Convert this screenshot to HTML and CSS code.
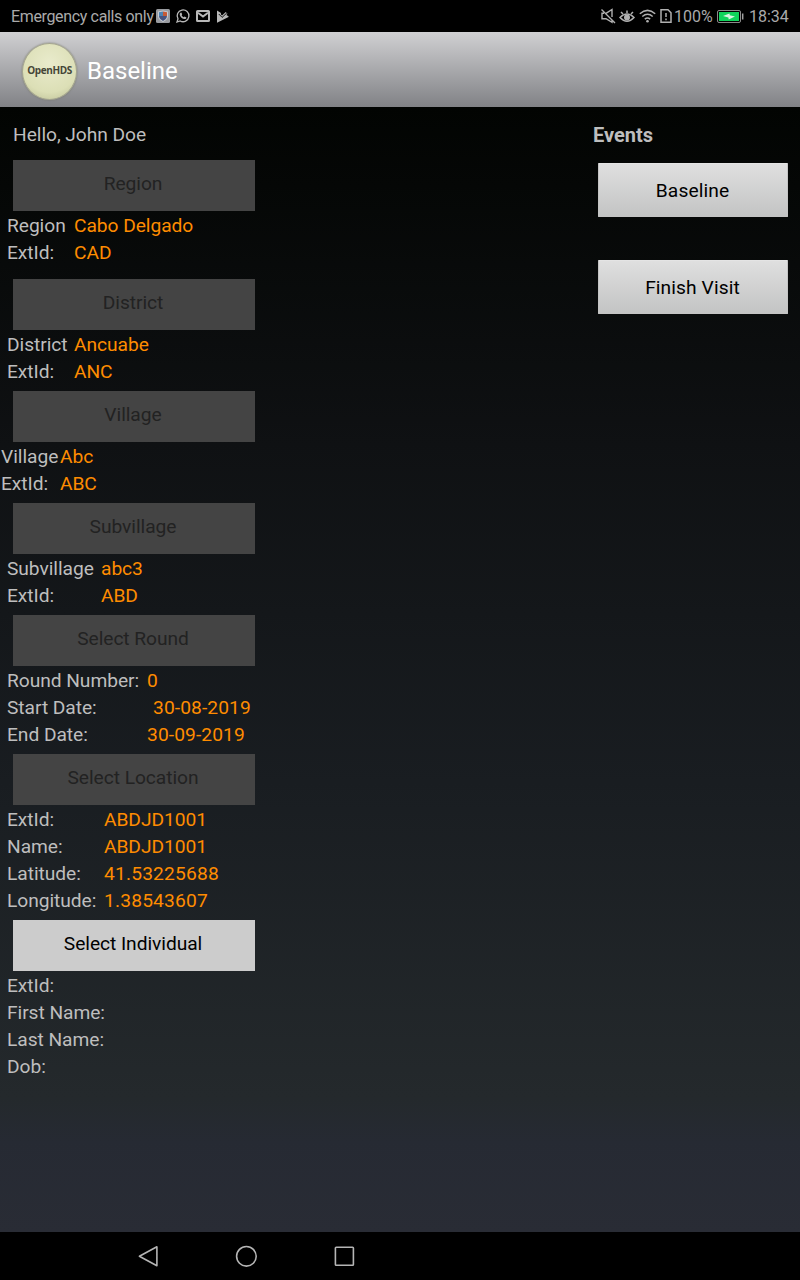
FILE: index.html
```
<!DOCTYPE html>
<html lang="en">
<head>
<meta charset="utf-8">
<title>Baseline</title>
<link rel="stylesheet" href="styles.css">
</head>
<body>
<div class="screen">
  <header class="status">
    <span class="carrier">Emergency calls only</span>
    <div class="notices">
      <svg width="14" height="14" viewBox="0 0 14 14"><rect width="14" height="14" rx="1.5" fill="#999ba0"/><path d="M2 2.5 7 1.5 12 2.5V7c0 3-3 5-5 6-2-1-5-3-5-6z" fill="#c5cad2"/><path d="M3 3.3 7 2.5V7H3z" fill="#4b82b2"/><path d="M7 2.5 11 3.3V7H7z" fill="#c65a36"/><path d="M3 7h8c0 2.300-2 4-4 5-2-1-4-2.700-4-5z" fill="#46547f"/></svg>
      <svg width="14" height="14" viewBox="0 0 14 14"><path d="M1 13 2 9.900A5.900 5.900 0 1 1 4.200 12z" fill="none" stroke="#b8b8b8" stroke-width="1.300"/><path d="M4.500 3.700 5.400 3.600 6.200 5.400 5.600 6.200Q6.300 7.600 7.800 8.300L8.500 7.500 10.400 8.400C10.300 9.800 9.200 10.300 8 10 5.800 9.500 4.200 7.700 3.800 6 3.600 5 3.900 4.100 4.500 3.700z" fill="#b8b8b8"/></svg>
      <svg width="14" height="12" viewBox="0 0 14 12" fill="none" stroke="#b8b8b8"><rect x="1" y=".9" width="12" height="10.200" rx=".6" stroke-width="2"/><path d="M2 2.700 7 6.500 12 2.700" stroke-width="2"/></svg>
      <svg width="13" height="13" viewBox="0 0 13 13"><path d="M1 .5 5 3 4.800 4.200 6 5.500 9.700 1.900 11.500 3.700 10.300 5 12.500 6.300V7L1 12.800z" fill="#b8b8b8"/><path d="M2.800 4 6.100 7.400 10.800 3" fill="none" stroke="#000" stroke-width=".9"/></svg>
    </div>
    <div class="system">
      <svg width="16" height="16" viewBox="0 0 16 16" fill="none" stroke="#b0b0b0" stroke-width="1.400"><path d="M6 5.300 12 1.500V9M12 12v2.300L6 10.700H2V5.300h2M1.500 1.500 15 15"/></svg>
      <svg class="eye" width="16" height="16" viewBox="0 0 16 16" fill="none" stroke="#b0b0b0" stroke-width="1.500"><path d="M1 9.500Q8 2.500 15 9.500 8 17 1 9.500zM8 5V2.500M4 6 2 4M12 6l2-2"/><circle cx="8" cy="9.500" r="3" fill="#b0b0b0" stroke="none"/></svg>
      <svg class="wifi" width="17" height="14" viewBox="0 0 17 14" fill="none" stroke="#b0b0b0" stroke-width="1.500"><path d="M.8 4.700Q8.500-2 16.200 4.700M3.300 7.500Q8.500 3 13.700 7.500M5.800 10.200Q8.500 8 11.200 10.200"/><circle cx="8.500" cy="12.300" r="1.300" fill="#b0b0b0" stroke="none"/></svg>
      <svg class="sim" width="12" height="14" viewBox="0 0 12 14"><path d="M1 .800H8L11 3.800V13.200H1zM6 4v4M6 9.500v1.700" fill="none" stroke="#b0b0b0" stroke-width="1.500"/></svg>
      <span class="percent">100%</span>
      <svg class="battery" width="27" height="13" viewBox="0 0 27 13"><rect x=".5" y=".5" width="23" height="12" rx="1.500" fill="none" stroke="#8b8b8b"/><rect x="2" y="2" width="20" height="9" fill="#10d45b"/><path d="M6 6 12.500 3.500 12.800 5.300 18 6.500 11.700 9.500 11.400 7.500z" fill="#d8f5e2"/><path d="M25.700 3.500v6" stroke="#a0a0a0" stroke-width="1.500"/></svg>
      <span class="clock">18:34</span>
    </div>
  </header>
  <div class="appbar">
    <div class="logo">OpenHDS</div>
    <h1 class="title">Baseline</h1>
  </div>
  <main class="content">
    <section class="filters">
      <p class="hello">Hello, John Doe</p>
      <div class="group region">
        <button class="pick" disabled>Region</button>
        <dl class="facts"><dt>Region</dt><dd>Cabo Delgado</dd><dt>ExtId:</dt><dd>CAD</dd></dl>
      </div>
      <div class="group district">
        <button class="pick" disabled>District</button>
        <dl class="facts"><dt>District</dt><dd>Ancuabe</dd><dt>ExtId:</dt><dd>ANC</dd></dl>
      </div>
      <div class="group village">
        <button class="pick" disabled>Village</button>
        <dl class="facts"><dt>Village</dt><dd>Abc</dd><dt>ExtId:</dt><dd>ABC</dd></dl>
      </div>
      <div class="group subvillage">
        <button class="pick" disabled>Subvillage</button>
        <dl class="facts"><dt>Subvillage</dt><dd>abc3</dd><dt>ExtId:</dt><dd>ABD</dd></dl>
      </div>
      <div class="group round">
        <button class="pick" disabled>Select Round</button>
        <dl class="facts"><dt>Round Number:</dt><dd>0</dd><dt>Start Date:</dt><dd class="indented">30-08-2019</dd><dt>End Date:</dt><dd>30-09-2019</dd></dl>
      </div>
      <div class="group location">
        <button class="pick" disabled>Select Location</button>
        <dl class="facts"><dt>ExtId:</dt><dd>ABDJD1001</dd><dt>Name:</dt><dd>ABDJD1001</dd><dt>Latitude:</dt><dd class="coord">41.53225688</dd><dt>Longitude:</dt><dd class="coord">1.38543607</dd></dl>
      </div>
      <div class="group individual">
        <button class="pick">Select Individual</button>
        <dl class="facts"><dt>ExtId:</dt><dd></dd><dt>First Name:</dt><dd></dd><dt>Last Name:</dt><dd></dd><dt>Dob:</dt><dd></dd></dl>
      </div>
    </section>
    <aside class="events">
      <h2 class="heading">Events</h2>
      <button class="event">Baseline</button>
      <button class="event">Finish Visit</button>
    </aside>
  </main>
  <nav class="navbar">
    <svg width="22" height="22" viewBox="-.4 -.3 22 22"><path d="M19.500 1.500V20.500L2 11z"/></svg>
    <svg width="22" height="22" viewBox="-.4 -.3 22 22"><circle cx="11" cy="11" r="9.800"/></svg>
    <svg width="22" height="22" viewBox="-.4 -.3 22 22"><rect x="2" y="2" width="18" height="18" rx=".8"/></svg>
  </nav>
</div>
</body>
</html>
```
FILE: styles.css
```
* { box-sizing: border-box; }
body { margin: 0; background: #000; font-family: Roboto, sans-serif; }
h1, h2, p, dl, dd { margin: 0; }
button { border: 0; font-family: inherit; }
svg { display: block; flex: none; overflow: visible; }

.screen {
  display: flex;
  flex-direction: column;
  width: 800px;
  height: 1280px;
  overflow: hidden;
  font-size: 19.2px;
  letter-spacing: -0.05px;
  color: #bebebe;
}

.status {
  display: flex;
  align-items: center;
  flex: none;
  height: 32px;
  padding: 0 11px;
  background: #000;
  color: #aaa;
  font-size: 16px;
  letter-spacing: 0;
  white-space: nowrap;
}
.carrier { width: 145px; padding-top: 1px; letter-spacing: -0.35px; }
.notices { display: flex; align-items: center; gap: 6px; }
.system { display: flex; align-items: center; margin-left: auto; }
.eye { margin-left: 3px; }
.wifi { margin-left: 4px; }
.sim { margin-left: 4px; }
.percent { width: 43px; margin-left: 2px; padding-top: 1px; }
.clock { width: 40px; margin-left: 5px; padding-top: 1px; }

.appbar {
  display: flex;
  align-items: center;
  flex: none;
  height: 75px;
  padding: 3px 22px 0;
  gap: 10px;
  background: linear-gradient(#d0d0d2, #818286);
}
.logo {
  width: 55px;
  height: 57px;
  border: 1px solid #a5a68f;
  border-radius: 50%;
  background: radial-gradient(circle at 50% 35%, #e9ebcc, #dcdfb6 65%, #b9bc92);
  box-shadow: 0 0 2px #75766b;
  color: #454638;
  font: bold 10px/52px "Open Sans", sans-serif;
  letter-spacing: -0.4px;
  text-align: center;
}
.title { margin-top: -1px; color: #fff; font-size: 24px; font-weight: 400; letter-spacing: 0; }

.content {
  display: flex;
  justify-content: space-between;
  flex: 1;
  min-height: 0;
  padding-top: 14px;
  background: linear-gradient(#020402, #0f1113 30%, #191d21 60%, #24292c 88%, #262a33 92%, #292c35);
}
.hello { height: 39px; padding-left: 13px; line-height: 28px; }
.group { padding: 0 0 7px 7px; }
.region { padding-bottom: 14px; }
.pick {
  display: block;
  width: 242px;
  height: 51px;
  margin-left: 6px;
  padding: 0 2px 4px 0;
  background: #ccc;
  color: #000;
  font-size: 19.2px;
  letter-spacing: -0.05px;
}
.pick:disabled { background: #444; color: #222; }
.facts {
  display: grid;
  grid-template-columns: 67px auto;
  grid-auto-rows: 27px;
  padding-top: 1px;
  margin-bottom: -1px;
  line-height: 27px;
  white-space: nowrap;
}
.facts dd { color: #ff8c00; }
.village { padding-left: 1px; }
.village .pick { margin-left: 12px; }
.village .facts { grid-template-columns: 59px auto; }
.subvillage .facts { grid-template-columns: 94px auto; }
.round .facts { grid-template-columns: 140px auto; }
.location .facts { grid-template-columns: 97px auto; }
.individual .facts { grid-template-columns: 105px auto; }
.facts .indented { padding-left: 6px; }
.round .facts dd { letter-spacing: 0.1px; }
.facts .coord { letter-spacing: 0.18px; }

.events { display: flex; flex-direction: column; width: 207px; }
.heading { height: 42px; font-size: 20px; line-height: 28px; letter-spacing: 0; }
.event {
  width: 190px;
  height: 54px;
  margin: 0 0 43px 5px;
  padding: 1px 1px 0 0;
  border: 1px solid #c4c4c4;
  border-top-color: #e4e4e4;
  border-radius: 1px;
  background: linear-gradient(#dfdfdf, #c3c4c4);
  color: #000;
  font-size: 19.2px;
  letter-spacing: 0.1px;
}

.navbar {
  display: flex;
  align-items: center;
  flex: none;
  gap: 76px;
  height: 48px;
  padding-left: 137px;
  background: #000;
}
.navbar svg { fill: none; stroke: #b5b5b5; stroke-width: 1.6; stroke-linejoin: round; }
```
